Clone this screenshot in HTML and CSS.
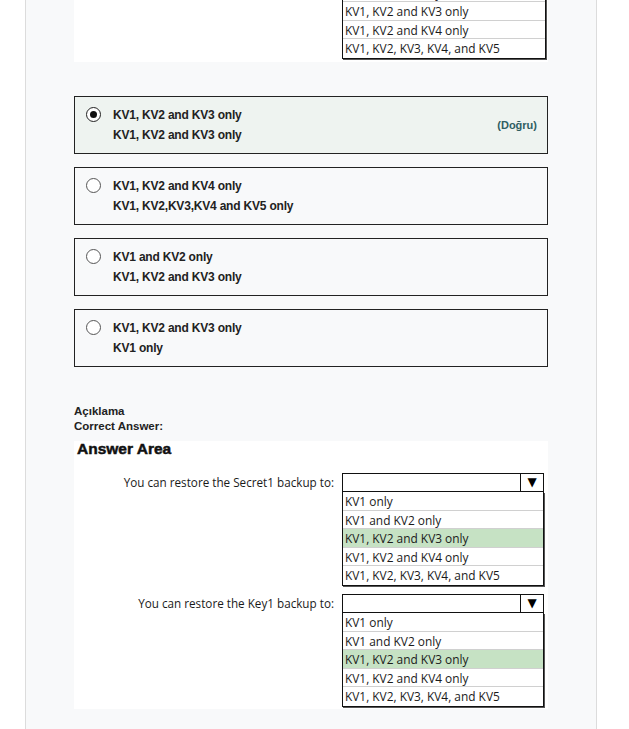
FILE: index.html
```html
<!DOCTYPE html>
<html>
<head>
<meta charset="utf-8">
<link rel="stylesheet" href="styles.css">
</head>
<body>
<div class="card">
  <div class="shot shot-top">
    <div class="ddlist top-list">
      <div class="row">KV1 only</div>
      <div class="row">KV1 and KV2 only</div>
      <div class="row">KV1, KV2 and KV3 only</div>
      <div class="row">KV1, KV2 and KV4 only</div>
      <div class="row">KV1, KV2, KV3, KV4, and KV5</div>
    </div>
  </div>

  <div class="options">
    <div class="opt correct">
      <span class="radio checked"></span>
      <div class="opt-text">
        <div>KV1, KV2 and KV3 only</div>
        <div>KV1, KV2 and KV3 only</div>
      </div>
      <span class="tag">(Doğru)</span>
    </div>
    <div class="opt">
      <span class="radio"></span>
      <div class="opt-text">
        <div>KV1, KV2 and KV4 only</div>
        <div>KV1, KV2,KV3,KV4 and KV5 only</div>
      </div>
    </div>
    <div class="opt">
      <span class="radio"></span>
      <div class="opt-text">
        <div>KV1 and KV2 only</div>
        <div>KV1, KV2 and KV3 only</div>
      </div>
    </div>
    <div class="opt">
      <span class="radio"></span>
      <div class="opt-text">
        <div>KV1, KV2 and KV3 only</div>
        <div>KV1 only</div>
      </div>
    </div>
  </div>

  <div class="explain">
    <div>Açıklama</div>
    <div>Correct Answer:</div>
  </div>

  <div class="shot answer">
    <div class="aa-title">Answer Area</div>
    <div class="q">
      <div class="q-label">You can restore the Secret1 backup to:</div>
      <div class="dd">
        <div class="dd-box"><span class="dd-arrow">▼</span></div>
        <div class="ddlist">
          <div class="row">KV1 only</div>
          <div class="row">KV1 and KV2 only</div>
          <div class="row sel">KV1, KV2 and KV3 only</div>
          <div class="row">KV1, KV2 and KV4 only</div>
          <div class="row">KV1, KV2, KV3, KV4, and KV5</div>
        </div>
      </div>
    </div>
    <div class="q">
      <div class="q-label">You can restore the Key1 backup to:</div>
      <div class="dd">
        <div class="dd-box"><span class="dd-arrow">▼</span></div>
        <div class="ddlist">
          <div class="row">KV1 only</div>
          <div class="row">KV1 and KV2 only</div>
          <div class="row sel">KV1, KV2 and KV3 only</div>
          <div class="row">KV1, KV2 and KV4 only</div>
          <div class="row">KV1, KV2, KV3, KV4, and KV5</div>
        </div>
      </div>
    </div>
  </div>
</div>
</body>
</html>
```
FILE: styles.css
```css
html, body {
  margin: 0;
  padding: 0;
  background: #ffffff;
}

.card {
  margin-left: 25px;
  width: 572px;
  min-height: 740px;
  background: #f8f9fa;
  border-left: 1px solid #dcdcdc;
  border-right: 1px solid #dcdcdc;
  padding: 0 48px;
  box-sizing: border-box;
  font-family: "Liberation Sans", Arial, sans-serif;
}

.shot {
  background: #ffffff;
  width: 474px;
}

.shot-top {
  height: 62px;
  display: flex;
  flex-direction: column;
  justify-content: flex-end;
  overflow: hidden;
  padding-left: 268px;
  box-sizing: border-box;
}

.top-list {
  width: 202px;
  margin-bottom: 3px;
}

.ddlist {
  border: 1.5px solid #111;
  border-top: none;
  background: #fff;
  font-family: "Open Sans", "Noto Sans", sans-serif;
  font-size: 11.9px;
  color: #1a1a1a;
  box-shadow: 1px 1px 0 #555;
}

.row {
  height: 18.6px;
  line-height: 18.6px;
  padding-left: 2px;
  border-bottom: 1px solid #d0d0d0;
  box-sizing: border-box;
  white-space: nowrap;
}

.row:last-child {
  border-bottom: none;
}

.row.sel {
  background: #c6e2c4;
}

.options {
  display: flex;
  flex-direction: column;
  gap: 13px;
  margin-top: 34px;
  width: 474px;
}

.opt {
  display: flex;
  align-items: flex-start;
  border: 1px solid #222;
  height: 58px;
  box-sizing: border-box;
  padding: 8px 10px 0 11px;
  font-size: 12px;
  font-weight: bold;
  color: #222;
}

.opt.correct {
  background: #eef3f0;
}

.radio {
  width: 15px;
  height: 15px;
  border: 1px solid #555;
  border-radius: 50%;
  box-sizing: border-box;
  margin-top: 2px;
  margin-right: 12px;
  flex: none;
  display: flex;
  align-items: center;
  justify-content: center;
  background: #fff;
}

.radio.checked {
  border: 1.5px solid #222;
}

.radio.checked::after {
  content: "";
  width: 7px;
  height: 7px;
  border-radius: 50%;
  background: #111;
}

.opt-text {
  flex: 1;
  line-height: 20px;
  letter-spacing: -0.2px;
}

.tag {
  align-self: center;
  margin-top: -8px;
  font-size: 11px;
  color: #2f5d62;
  font-weight: bold;
}

.explain {
  margin-top: 37px;
  font-size: 11.5px;
  font-weight: bold;
  color: #222;
  line-height: 15px;
}

.answer {
  margin-top: 7px;
  padding: 0 0 0 3px;
  box-sizing: border-box;
  height: 268px;
}

.aa-title {
  font-family: "Liberation Sans", Arial, sans-serif;
  font-weight: 900;
  font-size: 15.5px;
  color: #111;
  line-height: 16px;
  -webkit-text-stroke: 0.5px #111;
}

.q {
  display: flex;
  justify-content: flex-end;
  padding-right: 4px;
  margin-top: 16px;
}

.q + .q {
  margin-top: 8px;
}

.q-label {
  font-family: "Open Sans", "Noto Sans", sans-serif;
  font-size: 11.7px;
  color: #1a1a1a;
  margin-right: 8px;
  line-height: 18px;
}

.dd {
  width: 202px;
}

.dd-box {
  height: 19px;
  border: 1.5px solid #111;
  box-sizing: border-box;
  display: flex;
  justify-content: flex-end;
  background: #fff;
}

.dd-arrow {
  width: 22px;
  border-left: 1.5px solid #111;
  font-family: "DejaVu Sans", sans-serif;
  font-size: 12px;
  line-height: 16px;
  text-align: center;
  color: #000;
}
```
